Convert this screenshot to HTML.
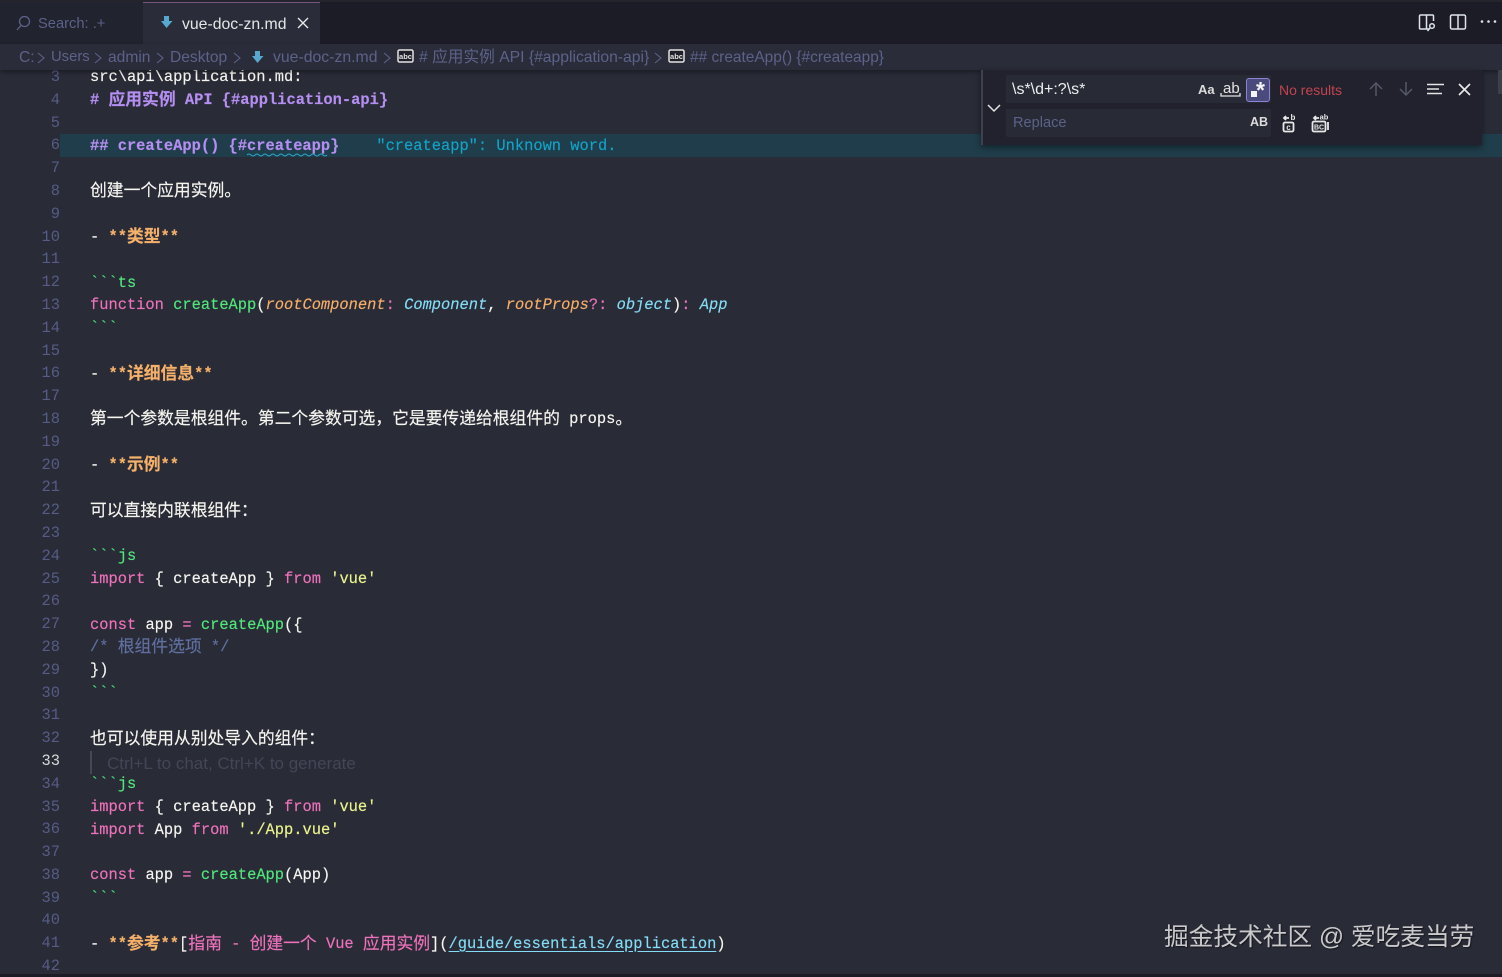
<!DOCTYPE html>
<html lang="zh"><head><meta charset="utf-8"><title>vue-doc-zn.md</title>
<style>
html,body{margin:0;padding:0;background:#292b37;width:1502px;height:977px;overflow:hidden}
*{box-sizing:border-box}
.abs{position:absolute}
body{position:relative;font-family:"Liberation Sans","Noto Sans CJK SC",sans-serif;color:#f8f8f2}
#code{position:absolute;left:90px;top:66.4px;width:1400px;font:15.4px/22.8px "Liberation Mono","Noto Sans CJK SC",monospace;-webkit-text-stroke:.15px}
#code div{height:22.8px;overflow:visible;white-space:pre}
#nums{position:absolute;left:0;width:60px;top:66px;text-align:right;font:15.4px/22.8px "Liberation Mono",monospace;color:#565c86}
#nums div{height:22.8px}
.c{font-family:"Noto Sans CJK SC",sans-serif;font-size:16.8px;line-height:0;position:relative;top:1px}
.h{color:#b48ef0;font-weight:bold}
.o{color:#f5b06a;font-weight:bold}
.g{color:#50e87a}
.p{color:#ee72bb}
.f{color:#f5ae6a;font-style:italic}
.q{color:#84dcf5;font-style:italic}
.y{color:#ecf48c}
.m{color:#60709f}
.w{color:#f6f6f0}
.lk{color:#84dcf5;text-decoration:underline;text-underline-offset:3px}
.bc{position:absolute;top:48px;font-size:15.6px;line-height:19px;color:#5c6289;white-space:pre}
</style></head><body>

<div id="nums"><div>3</div><div>4</div><div>5</div><div>6</div><div>7</div><div>8</div><div>9</div><div>10</div><div>11</div><div>12</div><div>13</div><div>14</div><div>15</div><div>16</div><div>17</div><div>18</div><div>19</div><div>20</div><div>21</div><div>22</div><div>23</div><div>24</div><div>25</div><div>26</div><div>27</div><div>28</div><div>29</div><div>30</div><div>31</div><div>32</div><div style="color:#d8d8d8">33</div><div>34</div><div>35</div><div>36</div><div>37</div><div>38</div><div>39</div><div>40</div><div>41</div><div>42</div></div>

<div class="abs" style="left:60px;top:134px;width:1442px;height:23px;background:#1f3d4a"></div>
<svg class="abs" style="left:247px;top:153px" width="82" height="4"><path d="M0 2 Q2 0 4 2 T8 2 T12 2 T16 2 T20 2 T24 2 T28 2 T32 2 T36 2 T40 2 T44 2 T48 2 T52 2 T56 2 T60 2 T64 2 T68 2 T72 2 T76 2 T80 2" fill="none" stroke="#2aa7c9" stroke-width="1"/></svg>

<div id="code">
<div class="w">src\api\application.md:</div>
<div class="h"># <span class="c">应用实例</span> API {#application-api}</div>
<div></div>
<div><span class="h">## createApp() {#createapp}</span>    <span style="color:#14a3c7">"createapp": Unknown word.</span></div>
<div></div>
<div class="w"><span class="c">创建一个应用实例。</span></div>
<div></div>
<div><span class="w">- </span><span class="o">**<span class="c">类型</span>**</span></div>
<div></div>
<div class="g">&#96;&#96;&#96;ts</div>
<div><span class="p">function</span> <span class="g">createApp</span><span class="w">(</span><span class="f">rootComponent</span><span class="p">:</span> <span class="q">Component</span><span class="w">,</span> <span class="f">rootProps</span><span class="p">?:</span> <span class="q">object</span><span class="w">)</span><span class="p">:</span> <span class="q">App</span></div>
<div class="g">&#96;&#96;&#96;</div>
<div></div>
<div><span class="w">- </span><span class="o">**<span class="c">详细信息</span>**</span></div>
<div></div>
<div class="w"><span class="c">第一个参数是根组件。第二个参数可选，它是要传递给根组件的</span> props<span class="c">。</span></div>
<div></div>
<div><span class="w">- </span><span class="o">**<span class="c">示例</span>**</span></div>
<div></div>
<div class="w"><span class="c">可以直接内联根组件：</span></div>
<div></div>
<div class="g">&#96;&#96;&#96;js</div>
<div><span class="p">import</span> <span class="w">{ createApp }</span> <span class="p">from</span> <span class="y">'vue'</span></div>
<div></div>
<div><span class="p">const</span> <span class="w">app</span> <span class="p">=</span> <span class="g">createApp</span><span class="w">({</span></div>
<div class="m">/* <span class="c">根组件选项</span> */</div>
<div class="w">})</div>
<div class="g">&#96;&#96;&#96;</div>
<div></div>
<div class="w"><span class="c">也可以使用从别处导入的组件：</span></div>
<div></div>
<div class="g">&#96;&#96;&#96;js</div>
<div><span class="p">import</span> <span class="w">{ createApp }</span> <span class="p">from</span> <span class="y">'vue'</span></div>
<div><span class="p">import</span> <span class="w">App</span> <span class="p">from</span> <span class="y">'./App.vue'</span></div>
<div></div>
<div><span class="p">const</span> <span class="w">app</span> <span class="p">=</span> <span class="g">createApp</span><span class="w">(App)</span></div>
<div class="g">&#96;&#96;&#96;</div>
<div></div>
<div><span class="w">- </span><span class="o">**<span class="c">参考</span>**</span><span class="w">[</span><span class="p"><span class="c">指南</span> - <span class="c">创建一个</span> Vue <span class="c">应用实例</span></span><span class="w">](</span><span class="lk">/guide/essentials/application</span><span class="w">)</span></div>
<div></div>
</div>

<div class="abs" style="left:90px;top:751px;width:2px;height:23px;background:#454857"></div>
<div class="abs" style="left:107px;top:753.500px;font-size:17px;line-height:20px;color:#434656;white-space:pre">Ctrl+L to chat, Ctrl+K to generate</div>

<!-- title/tab bar -->
<div class="abs" style="left:0;top:0;width:1502px;height:44px;background:#1b1c26"></div>
<div class="abs" style="left:0;top:0;width:1502px;height:2px;background:#23242c"></div>
<div class="abs" style="left:0;top:2px;width:143px;height:42px;background:#21232e"></div>
<div class="abs" style="left:143px;top:2px;width:177px;height:42px;background:#2a2c39;border-top:1px solid #77567f"></div>
<svg class="abs" style="left:15px;top:14px" width="19" height="19" viewBox="0 0 19 19" fill="none" stroke="#5c6289" stroke-width="1.3"><circle cx="9.5" cy="7.5" r="5"/><path d="M6 11.5 2 16"/></svg>
<div class="abs" style="left:38px;top:15px;font-size:14.700px;line-height:19px;color:#5c6289;white-space:pre">Search: .+</div>
<svg class="abs" style="left:160px;top:15px" width="14" height="15" viewBox="0 0 14 15"><path d="M4 1h5v5h3.500L6.500 13 1 6h3z" fill="#56a8cf"/></svg>
<div class="abs" style="left:182px;top:15px;font-size:15.800px;line-height:19px;color:#e6e6e6;white-space:pre">vue-doc-zn.md</div>
<svg class="abs" style="left:296px;top:16px" width="14" height="14" viewBox="0 0 14 14" stroke="#e8e8e8" stroke-width="1.400"><path d="M2 2l10 10M12 2 2 12"/></svg>

<svg class="abs" style="left:1418px;top:13px" width="19" height="19" viewBox="0 0 19 19" fill="none" stroke="#dfe3ea" stroke-width="1.500"><path d="M11 16H2.500a1 1 0 0 1-1-1V3a1 1 0 0 1 1-1h12a1 1 0 0 1 1 1v5M8.500 2v14"/><circle cx="14" cy="13" r="2.300"/><path d="m12 15-2.500 3"/></svg>
<svg class="abs" style="left:1449px;top:13px" width="18" height="18" viewBox="0 0 18 18" fill="none" stroke="#dfe3ea" stroke-width="1.500"><rect x="1.500" y="2" width="15" height="14" rx="1.500"/><path d="M9 2v14"/></svg>
<svg class="abs" style="left:1480px;top:19px" width="17" height="5" fill="#dfe3ea"><circle cx="2" cy="2.500" r="1.300"/><circle cx="8.500" cy="2.500" r="1.300"/><circle cx="15" cy="2.500" r="1.300"/></svg>

<!-- breadcrumbs -->
<div class="abs" style="left:0;top:44px;width:1502px;height:26px;background:#2a2c39;box-shadow:0 2px 4px rgba(0,0,0,.35)"></div>
<div class="bc" style="left:19px">C:</div>
<div class="bc" style="left:51px;font-size:14.800px">Users</div>
<div class="bc" style="left:108px">admin</div>
<div class="bc" style="left:170px">Desktop</div>
<div class="bc" style="left:273px;font-size:15.800px">vue-doc-zn.md</div>
<div class="bc" style="left:419px;font-size:15.700px"># 应用实例 API {#application-api}</div>
<div class="bc" style="left:690px;font-size:15.450px"><span>## createApp() {#createapp}</span></div>
<svg class="abs" style="left:0;top:44px" width="680" height="26" fill="none" stroke="#5c6289" stroke-width="1.100"><path d="M38 9l6 5-6 5M95 9l6 5-6 5M157 9l6 5-6 5M234 9l6 5-6 5M384 9l6 5-6 5M655 9l6 5-6 5"/></svg>
<svg class="abs" style="left:251px;top:50px" width="14" height="15" viewBox="0 0 14 15"><path d="M4 1h5v5h3.500L6.500 13 1 6h3z" fill="#56a8cf"/></svg>
<svg class="abs" style="left:397px;top:49px" width="18" height="15"><rect x="1" y="1" width="15" height="12" rx="1.500" fill="#1f2029" stroke="#e4e4e4" stroke-width="1.500"/><text x="8.500" y="10" font-family="Liberation Sans" font-size="7.500" font-weight="bold" text-anchor="middle" fill="#e4e4e4">abc</text></svg>
<svg class="abs" style="left:668px;top:49px" width="18" height="15"><rect x="1" y="1" width="15" height="12" rx="1.500" fill="#1f2029" stroke="#e4e4e4" stroke-width="1.500"/><text x="8.500" y="10" font-family="Liberation Sans" font-size="7.500" font-weight="bold" text-anchor="middle" fill="#e4e4e4">abc</text></svg>

<!-- find widget -->
<div class="abs" style="left:981px;top:70px;width:501px;height:75px;background:#21222d;border-left:2px solid #3f414d;box-shadow:0 2px 6px rgba(0,0,0,.45)"></div>
<svg class="abs" style="left:987px;top:103px" width="14" height="10" fill="none" stroke="#e4e4e4" stroke-width="1.500"><path d="M1 2l6 6 6-6"/></svg>
<div class="abs" style="left:1006px;top:75px;width:265px;height:28px;background:#282a36;border-radius:2px"></div>
<div class="abs" style="left:1006px;top:109px;width:265px;height:28px;background:#282a36;border-radius:2px"></div>
<div class="abs" style="left:1012px;top:79.500px;font-size:16px;line-height:19px;color:#eeeeee;white-space:pre">\s*\d+:?\s*</div>
<div class="abs" style="left:1013px;top:113.500px;font-size:14.600px;line-height:19px;color:#5c6289;white-space:pre">Replace</div>
<div class="abs" style="left:1198px;top:82px;font-size:13px;line-height:15px;font-weight:bold;color:#dcdcdc;white-space:pre">Aa</div>
<div class="abs" style="left:1223px;top:81px;font-size:15px;line-height:15px;color:#e4e4e4;white-space:pre">ab</div>
<svg class="abs" style="left:1220px;top:92px" width="22" height="6" fill="none" stroke="#e4e4e4" stroke-width="1.300"><path d="M1 1v3h19V1"/></svg>
<div class="abs" style="left:1246px;top:78px;width:24px;height:24px;background:#4a4a7c;border:1px solid #8b84d6;border-radius:3px"></div>
<div class="abs" style="left:1251px;top:91px;width:6px;height:6px;background:#f4f4f4"></div>
<div class="abs" style="left:1256px;top:79px;font-size:23px;line-height:23px;font-weight:bold;color:#f4f4f4">*</div>
<div class="abs" style="left:1279px;top:82px;font-size:14px;line-height:17px;color:#c24450;white-space:pre">No results</div>
<svg class="abs" style="left:1368px;top:81px" width="16" height="16" fill="none" stroke="#555868" stroke-width="1.500"><path d="M8 15V2M2 8l6-6 6 6"/></svg>
<svg class="abs" style="left:1398px;top:81px" width="16" height="16" fill="none" stroke="#555868" stroke-width="1.500"><path d="M8 1v13M2 8l6 6 6-6"/></svg>
<svg class="abs" style="left:1427px;top:83px" width="18" height="13" fill="none" stroke="#e4e4e4" stroke-width="1.600"><path d="M0 1.500h17M0 6h12M0 10.500h15"/></svg>
<svg class="abs" style="left:1458px;top:83px" width="13" height="13" stroke="#e8e8e8" stroke-width="1.700"><path d="M1 1l11 11M12 1 1 12"/></svg>
<div class="abs" style="left:1250px;top:115px;font-size:12.500px;line-height:15px;font-weight:bold;color:#dcdcdc;white-space:pre">AB</div>
<svg class="abs" style="left:1281px;top:113px" width="16" height="20" fill="none" stroke="#e8e8e8" stroke-width="1.800"><path d="M3 5h5M5 3 3 5l2 2"/><rect x="2.500" y="9.500" width="10" height="9" rx="1.500"/><text x="7.500" y="17" font-family="Liberation Sans" font-size="8" font-weight="bold" text-anchor="middle" fill="#e8e8e8" stroke="none">c</text><text x="12" y="7" font-family="Liberation Sans" font-size="8" font-weight="bold" text-anchor="middle" fill="#e8e8e8" stroke="none">b</text></svg>
<svg class="abs" style="left:1311px;top:113px" width="19" height="20" fill="none" stroke="#e8e8e8" stroke-width="1.800"><path d="M3 5h5M5 3 3 5l2 2"/><rect x="1.500" y="8.500" width="13" height="10" rx="1.500"/><path d="M17 9v8"/><text x="8" y="16.500" font-family="Liberation Sans" font-size="7" font-weight="bold" text-anchor="middle" fill="#e8e8e8" stroke="none">BC</text><text x="13" y="6.500" font-family="Liberation Sans" font-size="7.500" font-weight="bold" text-anchor="middle" fill="#e8e8e8" stroke="none">ab</text></svg>

<!-- scrollbar hint -->
<div class="abs" style="left:1498px;top:70px;width:4px;height:24px;background:#3d3f4b"></div>

<!-- bottom edge -->
<div class="abs" style="left:0;top:974px;width:1502px;height:3px;background:#1b1c26"></div>

<!-- watermark -->
<div class="abs" style="left:1164px;top:921px;font-size:24.700px;line-height:34px;color:#c9c9cb;white-space:pre;text-shadow:1px 1px 1px rgba(0,0,0,.5);font-family:'Liberation Sans','Noto Sans CJK SC',sans-serif">掘金技术社区 @ 爱吃麦当劳</div>
</body></html>
